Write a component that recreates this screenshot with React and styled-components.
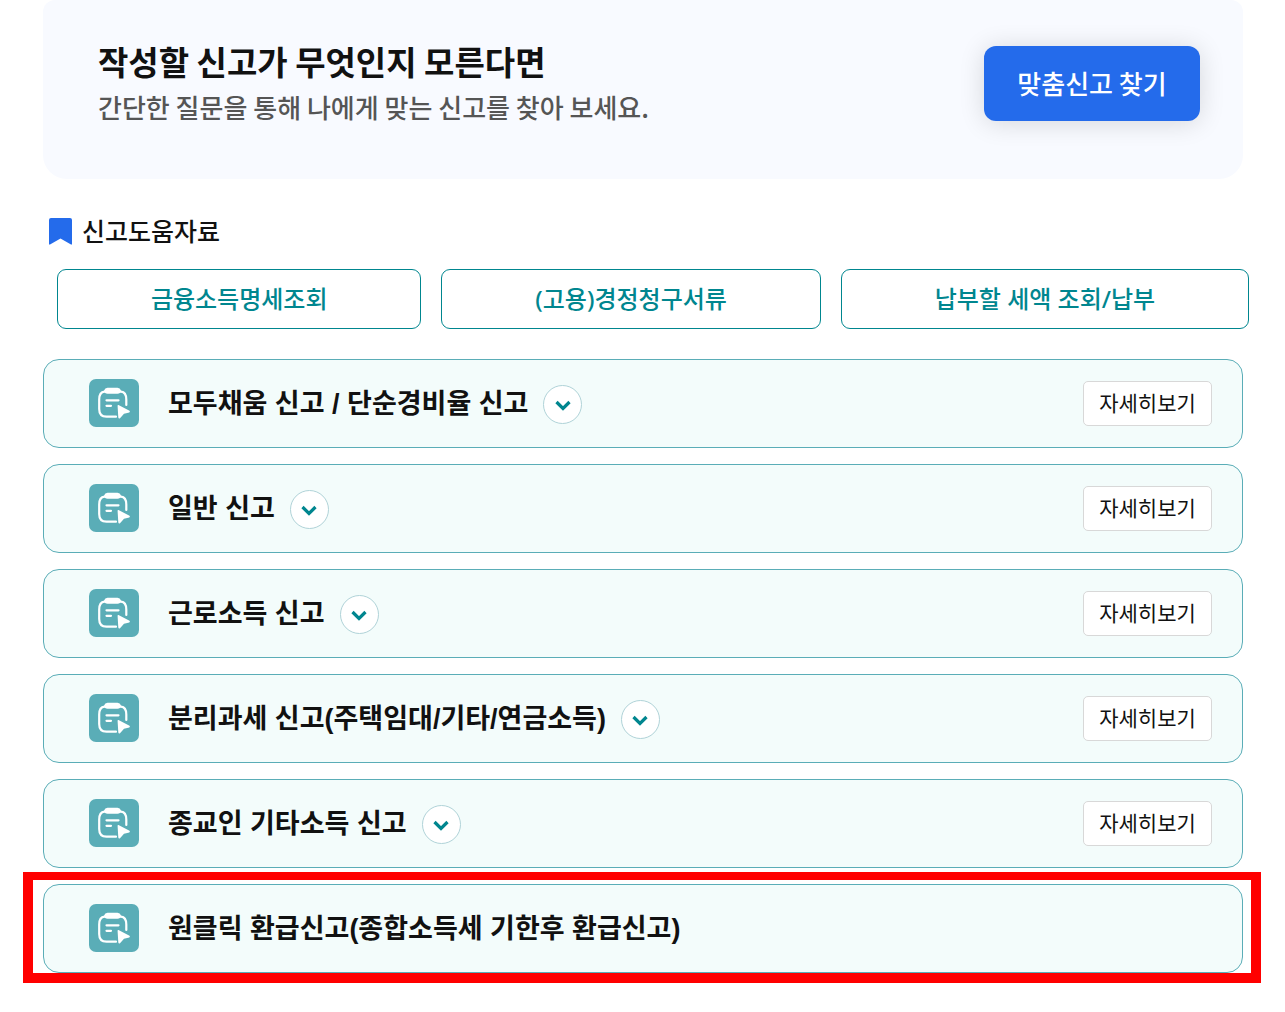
import React from 'react'
import styled, { createGlobalStyle } from 'styled-components';

const reports = [
    { title: '모두채움 신고 / 단순경비율 신고', more: true },
    { title: '일반 신고', more: true },
    { title: '근로소득 신고', more: true },
    { title: '분리과세 신고(주택임대/기타/연금소득)', more: true },
    { title: '종교인 기타소득 신고', more: true },
    { title: '원클릭 환급신고(종합소득세 기한후 환급신고)', marked: true },
];

const helpLinks = ['금융소득명세조회', '(고용)경정청구서류', '납부할 세액 조회/납부'];

const ReportIcon = () => (
    <StyledIcon viewBox="0 0 50 48" aria-hidden="true">
        <rect width="50" height="48" rx="7" fill="#5aadb7" />
        <path
            d="M27 37.7H17.5Q10.2 37.7 10.2 30V20.5Q10.2 13.2 15.5 12.600H32Q37.3 13.2 37.3 20.5V26"
            fill="none"
            stroke="#fff"
            strokeWidth="2.2"
            strokeLinecap="round"
        />
        <path d="M18.5 8.7H28.5Q31 8.7 32 11.5Q31.5 14.8 28.5 14.8H18.5Q15.5 14.8 15 11.5Q16 8.7 18.5 8.7Z" fill="#fff" />
        <path d="M17.5 21.3H29.5M17.5 26.8H22" stroke="#fff" strokeWidth="2.2" strokeLinecap="round" />
        <path d="M29.5 26L40.5 31.8Q41.5 32.700 40.3 33.4L35 34.8L31 39.2Q29.700 40 29.3 38.5L28.6 26.9Q28.5 25.700 29.5 26Z" fill="#fff" />
    </StyledIcon>
);

const App = () => {
    return (
        <>
            <GlobalStyle />
            <StyledPage>
                <StyledBanner>
                    <div>
                        <h1>작성할 신고가 무엇인지 모른다면</h1>
                        <p>간단한 질문을 통해 나에게 맞는 신고를 찾아 보세요.</p>
                    </div>
                    <StyledFind type="button">맞춤신고 찾기</StyledFind>
                </StyledBanner>
                <StyledHeading>
                    <svg width="23" height="27" viewBox="0 0 23 27" aria-hidden="true">
                        <path d="M2 0H21Q23 0 23 2V26.5H22L11.5 20.5L1 26.5H0V2Q0 0 2 0Z" fill="#246beb" />
                    </svg>
                    <h2>신고도움자료</h2>
                </StyledHeading>
                <StyledHelp>
                    {helpLinks.map((label) => (
                        <button type="button" key={label}>{label}</button>
                    ))}
                </StyledHelp>
                <StyledList>
                    {reports.map((report) => (
                        <StyledReport key={report.title} $marked={report.marked}>
                            <ReportIcon />
                            <h3>{report.title}</h3>
                            {report.more && (
                                <>
                                    <StyledToggle type="button" aria-label={`${report.title} 펼치기`}>
                                        <svg width="16" height="12" viewBox="0 0 16 12" aria-hidden="true">
                                            <path d="M1.5 2L8 8.5L14.5 2" fill="none" stroke="#00868f" strokeWidth="3.2" />
                                        </svg>
                                    </StyledToggle>
                                    <StyledDetail type="button">자세히보기</StyledDetail>
                                </>
                            )}
                        </StyledReport>
                    ))}
                </StyledList>
            </StyledPage>
        </>
    )
}

const GlobalStyle = createGlobalStyle`
    * {
        box-sizing: border-box;
        margin: 0;
        padding: 0;
    }

    body {
        background: #fff;
        color: #111;
        font-family: "Noto Sans", "Noto Sans CJK KR", sans-serif;
    }

    button {
        font-family: inherit;
        cursor: pointer;
    }
`;

const StyledPage = styled.main`
    padding: 0 42px 40px 43px;
`;

const StyledBanner = styled.section`
    display: flex;
    justify-content: space-between;
    align-items: flex-start;
    padding: 38px 43px 52px 55px;
    border-radius: 12px 12px 24px 24px;
    background: #f8faff;
    font-family: "Noto Sans CJK KR", sans-serif;

    h1 {
        margin-bottom: 2px;
        font-size: 33px;
        line-height: 46px;
        font-weight: 700;
    }

    p {
        color: #555;
        font-size: 26px;
        line-height: 41px;
        font-weight: 500;
    }
`;

const StyledFind = styled.button`
    margin-top: 8px;
    width: 216px;
    height: 75px;
    padding-bottom: 3px;
    border: 0;
    border-radius: 12px;
    background: #246beb;
    color: #fff;
    font-size: 26px;
    font-weight: 500;
    box-shadow: 0 2px 26px rgba(0, 0, 0, 0.14);
`;

const StyledHeading = styled.div`
    display: flex;
    align-items: center;
    gap: 10px;
    margin-top: 32px;
    padding-left: 6px;

    h2 {
        font-size: 25px;
        line-height: 40px;
        font-weight: 500;
    }
`;

const StyledHelp = styled.div`
    display: flex;
    gap: 20px;
    margin: 18px -6px 0 14px;

    button {
        flex: 1 1 auto;
        height: 60px;
        padding-bottom: 3px;
        border: 1px solid #00868f;
        border-radius: 9px;
        background: #fff;
        color: #00868f;
        font-size: 24px;
        font-weight: 500;
    }
`;

const StyledList = styled.ul`
    display: flex;
    flex-direction: column;
    gap: 16px;
    margin-top: 30px;
    list-style: none;
`;

const StyledReport = styled.li`
    position: relative;
    display: flex;
    align-items: center;
    height: 89px;
    padding: 0 30px 0 45px;
    border: 1px solid #5aadb7;
    border-radius: 16px;
    background: #f3fcfb;

    h3 {
        margin: 0 15px 0 29px;
        font-family: "Liberation Sans", "Noto Sans CJK KR", sans-serif;
        font-size: 27px;
        line-height: 40px;
        font-weight: 700;
    }

    ${({ $marked }) => $marked && `
        &::after {
            content: '';
            position: absolute;
            inset: -13px -19px -11px -21px;
            border: 10px solid #f00;
            border-top-width: 8px;
        }
    `}
`;

const StyledIcon = styled.svg`
    width: 50px;
    height: 48px;
    flex-shrink: 0;
    margin-bottom: 2px;
`;

const StyledToggle = styled.button`
    display: flex;
    align-items: center;
    justify-content: center;
    width: 39px;
    height: 39px;
    padding-top: 3px;
    margin-top: 2px;
    flex-shrink: 0;
    border: 1px solid #b0d3d8;
    border-radius: 50%;
    background: #fff;
`;

const StyledDetail = styled.button`
    width: 129px;
    height: 45px;
    padding-bottom: 3px;
    flex-shrink: 0;
    margin-left: auto;
    border: 1px solid #d8d8d8;
    border-radius: 5px;
    background: #fff;
    color: #111;
    font-size: 21px;
    font-weight: 400;
`;

export default App;
